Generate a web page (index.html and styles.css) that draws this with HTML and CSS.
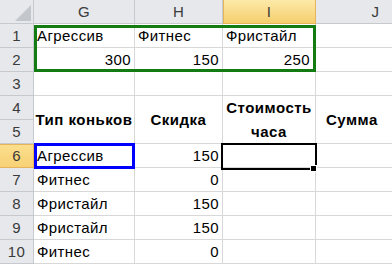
FILE: index.html
```html
<!DOCTYPE html>
<html lang="ru">
<head>
<meta charset="utf-8">
<title>Скидки на коньки</title>
<link rel="stylesheet" href="styles.css">
</head>
<body>
<div class="sheet">
  <div class="grid">
    <div class="cell corner">
      <svg class="corner-mark" width="34" height="24" viewBox="0 0 34 24"><polygon points="31,5 31,21 15,21" fill="#c3c6ca"/></svg>
    </div>
    <div class="cell colh">G</div>
    <div class="cell colh">H</div>
    <div class="cell colh active">I</div>
    <div class="cell colh">J</div>

    <div class="cell rowh">1</div>
    <div class="cell">Агрессив</div>
    <div class="cell">Фитнес</div>
    <div class="cell">Фристайл</div>
    <div class="cell"></div>

    <div class="cell rowh">2</div>
    <div class="cell num">300</div>
    <div class="cell num">150</div>
    <div class="cell num wide">250</div>
    <div class="cell"></div>

    <div class="cell rowh">3</div>
    <div class="cell"></div>
    <div class="cell"></div>
    <div class="cell"></div>
    <div class="cell"></div>

    <div class="cell rowh">4</div>
    <div class="cell hd">Тип коньков</div>
    <div class="cell hd">Скидка</div>
    <div class="cell hd">Стоимость<br>часа</div>
    <div class="cell hd hd-left">Сумма</div>
    <div class="cell rowh">5</div>

    <div class="cell rowh active">6</div>
    <div class="cell">Агрессив</div>
    <div class="cell num">150</div>
    <div class="cell"></div>
    <div class="cell"></div>

    <div class="cell rowh">7</div>
    <div class="cell">Фитнес</div>
    <div class="cell num">0</div>
    <div class="cell"></div>
    <div class="cell"></div>

    <div class="cell rowh">8</div>
    <div class="cell">Фристайл</div>
    <div class="cell num">150</div>
    <div class="cell"></div>
    <div class="cell"></div>

    <div class="cell rowh">9</div>
    <div class="cell">Фристайл</div>
    <div class="cell num">150</div>
    <div class="cell"></div>
    <div class="cell"></div>

    <div class="cell rowh">10</div>
    <div class="cell">Фитнес</div>
    <div class="cell num">0</div>
    <div class="cell"></div>
    <div class="cell"></div>
  </div>

  <!-- range borders and the active cell frame drawn over the grid -->
  <div class="frame frame-green"></div>
  <div class="frame frame-blue"></div>
  <div class="frame frame-active"></div>
  <div class="fill-handle"></div>
</div>
</body>
</html>
```
FILE: styles.css
```css
html, body {
  margin: 0;
  padding: 0;
  background: #fff;
}

body {
  font-family: "Liberation Sans", Arial, sans-serif;
  font-size: 15px;
  color: #000;
}

.sheet {
  position: relative;
  width: 392px;
  height: 265px;
  overflow: hidden;
}

.grid {
  display: grid;
  grid-template-columns: 34px 101px 88px 93px 120px;
  grid-auto-rows: 24px;
}

.cell {
  box-sizing: border-box;
  border-right: 1px solid #d8d8d8;
  border-bottom: 1px solid #d8d8d8;
  display: flex;
  align-items: flex-end;
  padding: 0 3px 2px;
  line-height: 18px;
  white-space: nowrap;
  letter-spacing: 0.4px;
  overflow: hidden;
}

.num {
  justify-content: flex-end;
}

.num.wide {
  padding-right: 5px;
}

/* headers */
.corner,
.colh,
.rowh {
  background: #e6e8eb;
  border-right-color: #c6cacf;
  border-bottom-color: #c6cacf;
  color: #3a3a3a;
  justify-content: center;
  padding: 0;
}

.corner {
  position: relative;
}

.corner-mark {
  position: absolute;
  left: 0;
  top: 0;
}

.colh {
  align-items: center;
  padding-top: 1px;
}

.rowh {
  grid-column: 1;
  padding-bottom: 2px;
}

.colh.active {
  background: linear-gradient(#fce9a8, #f6cf6e);
  border-right-color: #e6b45a;
  border-bottom-color: #e6b45a;
  box-shadow: inset 1px 0 0 #e6b45a;
}

.rowh.active {
  background: linear-gradient(#fbdf8e, #f7d175);
  border-right-color: #e6b45a;
  border-bottom-color: #e6b45a;
  box-shadow: inset 0 1px 0 #e6b45a;
}

/* merged title cells, rows 4–5 */
.hd {
  grid-row: span 2;
  font-weight: bold;
  align-items: center;
  justify-content: center;
  text-align: center;
  line-height: 24px;
  white-space: normal;
  padding: 0;
  letter-spacing: 0.5px;
}

.hd-left {
  justify-content: flex-start;
  padding-left: 10px;
}

/* overlays */
.frame {
  position: absolute;
  box-sizing: border-box;
}

.frame-green {
  left: 34px;
  top: 25px;
  width: 282px;
  height: 47px;
  border: 3px solid #127c12;
}

.frame-blue {
  left: 34px;
  top: 143px;
  width: 101px;
  height: 26px;
  border: 3px solid #0000ff;
}

.frame-active {
  left: 221px;
  top: 143px;
  width: 96px;
  height: 27px;
  border: 2px solid #000;
}

.fill-handle {
  position: absolute;
  box-sizing: border-box;
  left: 310px;
  top: 165px;
  width: 7px;
  height: 7px;
  background: #000;
  border: 1px solid #fff;
}
```
